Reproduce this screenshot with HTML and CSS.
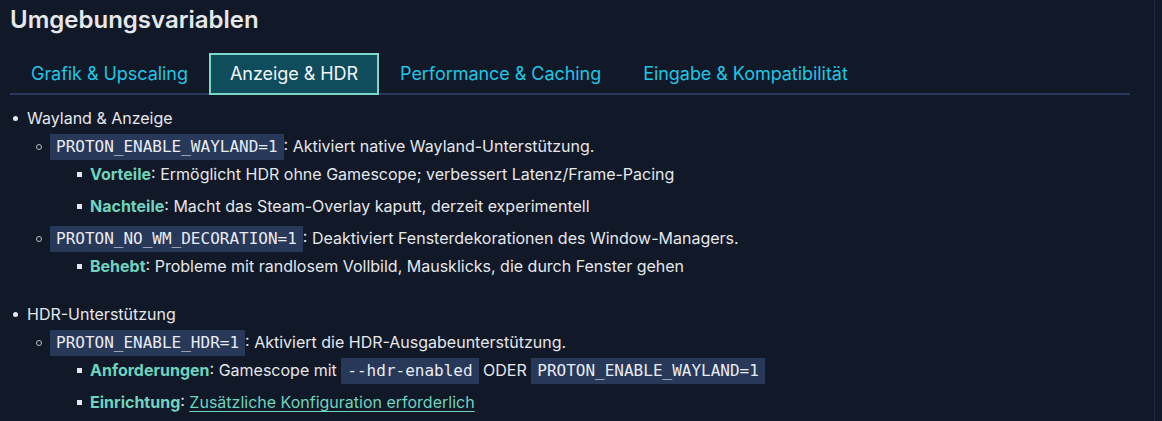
FILE: index.html
```html
<!DOCTYPE html>
<html lang="de">
<head>
<meta charset="utf-8">
<title>Umgebungsvariablen</title>
<link rel="stylesheet" href="styles.css">
</head>
<body>
<main class="panel">
  <h2 class="title">Umgebungsvariablen</h2>
  <nav class="tabs">
    <button class="tab">Grafik &amp; Upscaling</button>
    <button class="tab active">Anzeige &amp; HDR</button>
    <button class="tab">Performance &amp; Caching</button>
    <button class="tab">Eingabe &amp; Kompatibilität</button>
  </nav>
  <ul class="l1">
    <li>Wayland &amp; Anzeige
      <ul class="l2">
        <li><code>PROTON_ENABLE_WAYLAND=1</code>: Aktiviert native Wayland-Unterstützung.
          <ul class="l3">
            <li><strong>Vorteile</strong>: Ermöglicht HDR ohne Gamescope; verbessert Latenz/Frame-Pacing</li>
            <li><strong>Nachteile</strong>: Macht das Steam-Overlay kaputt, derzeit experimentell</li>
          </ul>
        </li>
        <li><code>PROTON_NO_WM_DECORATION=1</code>: Deaktiviert Fensterdekorationen des Window-Managers.
          <ul class="l3">
            <li><strong>Behebt</strong>: Probleme mit randlosem Vollbild, Mausklicks, die durch Fenster gehen</li>
          </ul>
        </li>
      </ul>
    </li>
    <li>HDR-Unterstützung
      <ul class="l2">
        <li><code>PROTON_ENABLE_HDR=1</code>: Aktiviert die HDR-Ausgabeunterstützung.
          <ul class="l3">
            <li><strong>Anforderungen</strong>: Gamescope mit <code>--hdr-enabled</code> ODER <code>PROTON_ENABLE_WAYLAND=1</code></li>
            <li><strong>Einrichtung</strong>: <a href="#">Zusätzliche Konfiguration erforderlich</a></li>
          </ul>
        </li>
      </ul>
    </li>
  </ul>
</main>
</body>
</html>
```
FILE: styles.css
```css
html, body {
  margin: 0;
  background: #111827;
}
body {
  font-family: Inter, "Noto Sans", sans-serif;
  color: #e5e7eb;
  height: 421px;
  overflow: hidden;
}
.panel {
  box-sizing: border-box;
  width: 1155px;
  height: 421px;
  border-right: 1px solid #1c2744;
  padding: 4px 24px 0 10px;
}
.title {
  margin: 0;
  font-size: 24px;
  line-height: 32px;
  font-weight: 600;
  color: #e5e7eb;
}
.tabs {
  display: flex;
  margin-top: 17px;
  border-bottom: 2px solid #2a3a5c;
  height: 40px;
}
.tab {
  font-family: Inter, "Noto Sans", sans-serif;
  font-size: 18px;
  letter-spacing: -0.05px;
  line-height: 22px;
  padding: 8px 19px 10px;
  height: 42px;
  box-sizing: border-box;
  border: 2px solid transparent;
  background: transparent;
  color: #1fc6e6;
  cursor: pointer;
}
.tab.active {
  background: #0f4c5c;
  border-color: #7ed8c6;
  color: #f1f5f9;
}
ul {
  margin: 0;
  list-style: none;
  padding: 0;
}
li {
  font-size: 16px;
  line-height: 28px;
  position: relative;
}
.l1 {
  margin-top: 9px;
}
.l1 > li {
  padding-left: 17px;
  padding-bottom: 16px;
}
.l1 > li::before {
  content: "";
  position: absolute;
  left: 3px;
  top: 12px;
  width: 5px;
  height: 5px;
  border-radius: 50%;
  background: #e5e7eb;
}
.l2 > li {
  padding-left: 23px;
}
.l2 > li::before {
  content: "";
  position: absolute;
  left: 9px;
  top: 12px;
  width: 6px;
  height: 6px;
  box-sizing: border-box;
  border-radius: 50%;
  border: 1px solid #b9bec7;
}
.l3 > li {
  padding-left: 40px;
  margin-bottom: 4px;
}
.l3 > li::before {
  content: "";
  position: absolute;
  left: 27px;
  top: 12px;
  width: 5px;
  height: 5px;
  background: #e5e7eb;
}
code {
  font-family: "DejaVu Sans Mono", monospace;
  font-size: 16px;
  line-height: 1;
  background: #283859;
  color: #e8ecf3;
  padding: 3px 6px 4px;
}
strong {
  color: #6fd4be;
  font-weight: 700;
}
a {
  color: #6fd4be;
  text-decoration: underline;
  text-underline-offset: 3px;
}
```
